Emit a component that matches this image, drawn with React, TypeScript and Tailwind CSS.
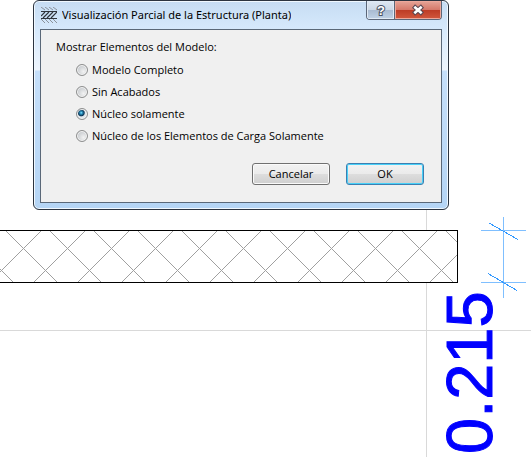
import { useState } from "react";

const options = [
  "Modelo Completo",
  "Sin Acabados",
  "Núcleo solamente",
  "Núcleo de los Elementos de Carga Solamente",
];

const HATCH_STEP = 44;
const hatchCells = Array.from({ length: 12 }, (_, i) => (i - 1) * HATCH_STEP);

function PlanDrawing() {
  return (
    <svg
      className="absolute inset-0 h-full w-full"
      shapeRendering="crispEdges"
      fill="none"
      aria-label="Planta"
    >
      {/* grid axes */}
      <path d="M426.5 0V2000M0 330.5H4000" stroke="#d9d9d9" />

      {/* wall section */}
      <clipPath id="wall">
        <rect x="0" y="231" width="457" height="51" />
      </clipPath>
      <rect x="-2" y="230.5" width="459.5" height="52" fill="#fff" stroke="#000" />
      <g clipPath="url(#wall)" stroke="#a0a0a0">
        {hatchCells.map((x) => (
          <path key={x} d={`M${x + 6} 231l52 52M${x + 41} 231l-52 52`} />
        ))}
      </g>

      {/* dimension line */}
      <path d="M503.5 217V298M481 230.5H526M481 282.5H526" stroke="#7fbfff" />
      <path d="M489 223L518 239.500M488 273.500L517 290.500" stroke="#3399ff" />
      <text
        transform="translate(492 454) rotate(-90)"
        fill="#0000ff"
        stroke="#0000ff"
        className="font-['Liberation_Sans',Arial,sans-serif] text-[65px]"
      >
        0.215
      </text>
    </svg>
  );
}

function HatchIcon() {
  return (
    <svg className="h-4 w-4 shrink-0" viewBox="0 0 16 16" fill="none" aria-hidden="true">
      <path
        d="M0 0l4 3M4 0l4 3M8 0l4 3M12 0l4 3M0 12l4 4M4 12l4 4M8 12l4 4M12 12l4 4"
        stroke="#8b929b"
      />
      <path d="M0 4.500H16M0 11.500H16" stroke="#30353c" />
      <path d="M0 9l4-4M2 11l6-6M6 11l6-6M10 11l6-6" stroke="#30353c" strokeWidth="1.200" />
    </svg>
  );
}

function TitleBar() {
  return (
    <header className="flex h-7 items-start">
      <div className="flex h-7 min-w-0 flex-1 items-center gap-[5px] pl-px">
        <HatchIcon />
        <h1 className="truncate font-['Noto_Sans','Segoe_UI',sans-serif] text-[11px] text-black">
          Visualización Parcial de la Estructura (Planta)
        </h1>
      </div>
      <div className="flex h-[19px] overflow-hidden rounded-b border border-t-0 border-[#5b6678]">
        <button
          type="button"
          aria-label="Ayuda"
          className="flex w-7 items-center justify-center border-r border-[#5b6678] bg-[linear-gradient(#dfe8f3,#ccd8e6_48%,#a9bbd1_52%,#c0d2e6)] shadow-[inset_0_0_0_1px_#e0eaf5]"
        >
          <svg className="h-4 w-4" viewBox="0 0 16 16" aria-hidden="true">
            <text
              x="8"
              y="13"
              textAnchor="middle"
              fill="#fff"
              stroke="#4a5263"
              strokeWidth="2"
              paintOrder="stroke"
              className="font-['Liberation_Sans',Arial,sans-serif] text-[13px] font-bold"
            >
              ?
            </text>
          </svg>
        </button>
        <button
          type="button"
          aria-label="Cerrar"
          className="flex w-[46px] items-center justify-center bg-[linear-gradient(#e6a598,#d6796a_48%,#bd3c26_52%,#d2583d)] shadow-[inset_0_0_0_1px_#eda89b]"
        >
          <svg className="h-3 w-3" viewBox="0 0 12 12" fill="none" aria-hidden="true">
            <path d="M1.500 2l9 8M10.500 2l-9 8" stroke="#5a4650" strokeWidth="4.600" />
            <path d="M2.300 2.700l7.400 6.600M9.700 2.700l-7.400 6.600" stroke="#fff" strokeWidth="2.600" />
          </svg>
        </button>
      </div>
    </header>
  );
}

export default function App() {
  const [selected, setSelected] = useState(options[2]);

  return (
    <main className="relative min-h-screen overflow-hidden bg-white pl-[33px] font-['Open_Sans','Segoe_UI',sans-serif]">
      <PlanDrawing />

      <section
        role="dialog"
        aria-label="Visualización Parcial de la Estructura"
        className="relative w-full max-w-[416px] rounded-md border border-[#2c3440] bg-[linear-gradient(#c6dcf3,#d6e9fc_28px,#edf4fc_69px,#c5dffa_70px,#b5d5f5)] px-1.5 pb-1.5 shadow-[inset_0_0_0_1px_#f0f8ff]"
      >
        <TitleBar />

        <form
          onSubmit={(e) => e.preventDefault()}
          className="border border-[#5a6878] bg-[#f0f0f0] px-[15px] pt-[7px] pb-[17px] text-[11px] text-black"
        >
          <fieldset>
            <legend className="leading-5">Mostrar Elementos del Modelo:</legend>
            <div className="mt-0.5 pl-5">
              {options.map((option) => (
                <label key={option} className="flex h-[22px] items-center gap-1">
                  <input
                    type="radio"
                    name="elementos"
                    checked={selected === option}
                    onChange={() => setSelected(option)}
                    className="h-3 w-3 shrink-0 appearance-none rounded-full border border-[#8e8f8f] bg-[radial-gradient(circle_at_65%_65%,#f2f2f2,#c4c8cc_75%)] shadow-[inset_0_0_0_1px_#f4f4f4] checked:bg-[radial-gradient(circle_at_42%_38%,#a8ecff_0,#2d9dcc_1px,#0c3555_3px,#0c3555_3px,#dfe5ea_4px)]"
                  />
                  {option}
                </label>
              ))}
            </div>
          </fieldset>

          <div className="mt-4 flex justify-end gap-4 pr-0.5">
            <button
              type="button"
              className="h-[22px] w-[78px] rounded-[3px] border border-[#707070] bg-[linear-gradient(#f2f2f2,#ebebeb_48%,#dddddd_52%,#cfcfcf)] shadow-[inset_0_0_0_1px_#fafafa]"
            >
              Cancelar
            </button>
            <button
              type="submit"
              className="h-[22px] w-[78px] rounded-[3px] border border-[#3c7fb1] bg-[linear-gradient(#f2f2f2,#ebebeb_48%,#dddddd_52%,#cfcfcf)] shadow-[inset_0_0_0_1px_#48d0f8]"
            >
              OK
            </button>
          </div>
        </form>
      </section>
    </main>
  );
}
